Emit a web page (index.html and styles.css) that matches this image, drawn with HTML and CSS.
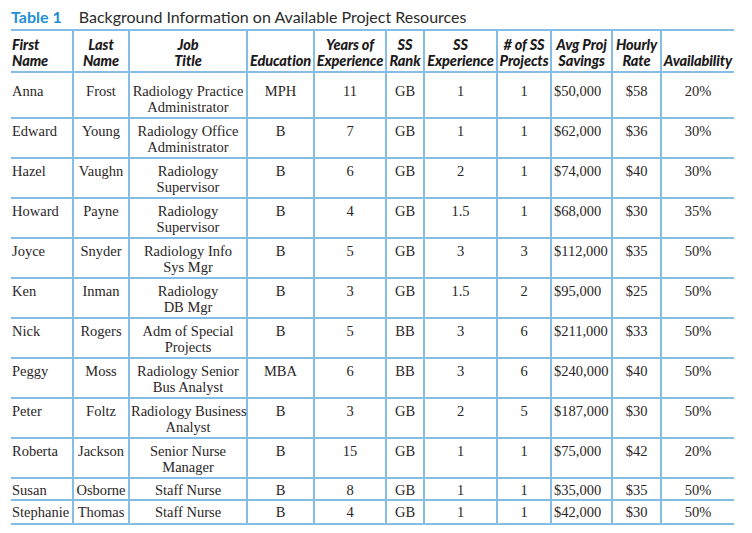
FILE: index.html
```html
<!DOCTYPE html>
<html lang="en">
<head>
<meta charset="utf-8">
<title>Table 1 Background Information on Available Project Resources</title>
<link rel="stylesheet" href="styles.css">
</head>
<body>
<div class="page">
  <h1 class="caption"><span class="label">Table 1</span><span class="caption-text">Background Information on Available Project Resources</span></h1>
  <table class="resources">
    <colgroup>
      <col class="c1"><col class="c2"><col class="c3"><col class="c4"><col class="c5"><col class="c6"><col class="c7"><col class="c8"><col class="c9"><col class="c10"><col class="c11">
    </colgroup>
    <thead>
      <tr>
        <th class="left">First<br>Name</th>
        <th>Last<br>Name</th>
        <th>Job<br>Title</th>
        <th>Education</th>
        <th>Years of<br>Experience</th>
        <th>SS<br>Rank</th>
        <th>SS<br>Experience</th>
        <th># of SS<br>Projects</th>
        <th>Avg Proj<br>Savings</th>
        <th>Hourly<br>Rate</th>
        <th>Availability</th>
      </tr>
    </thead>
    <tbody>
      <tr class="first">
        <td class="left">Anna</td><td>Frost</td><td>Radiology Practice<br>Administrator</td><td>MPH</td><td>11</td><td>GB</td><td>1</td><td>1</td><td class="money">$50,000</td><td>$58</td><td>20%</td>
      </tr>
      <tr>
        <td class="left">Edward</td><td>Young</td><td>Radiology Office<br>Administrator</td><td>B</td><td>7</td><td>GB</td><td>1</td><td>1</td><td class="money">$62,000</td><td>$36</td><td>30%</td>
      </tr>
      <tr>
        <td class="left">Hazel</td><td>Vaughn</td><td>Radiology<br>Supervisor</td><td>B</td><td>6</td><td>GB</td><td>2</td><td>1</td><td class="money">$74,000</td><td>$40</td><td>30%</td>
      </tr>
      <tr>
        <td class="left">Howard</td><td>Payne</td><td>Radiology<br>Supervisor</td><td>B</td><td>4</td><td>GB</td><td>1.5</td><td>1</td><td class="money">$68,000</td><td>$30</td><td>35%</td>
      </tr>
      <tr>
        <td class="left">Joyce</td><td>Snyder</td><td>Radiology Info<br>Sys Mgr</td><td>B</td><td>5</td><td>GB</td><td>3</td><td>3</td><td class="money">$112,000</td><td>$35</td><td>50%</td>
      </tr>
      <tr>
        <td class="left">Ken</td><td>Inman</td><td>Radiology<br>DB Mgr</td><td>B</td><td>3</td><td>GB</td><td>1.5</td><td>2</td><td class="money">$95,000</td><td>$25</td><td>50%</td>
      </tr>
      <tr>
        <td class="left">Nick</td><td>Rogers</td><td>Adm of Special<br>Projects</td><td>B</td><td>5</td><td>BB</td><td>3</td><td>6</td><td class="money">$211,000</td><td>$33</td><td>50%</td>
      </tr>
      <tr>
        <td class="left">Peggy</td><td>Moss</td><td>Radiology Senior<br>Bus Analyst</td><td>MBA</td><td>6</td><td>BB</td><td>3</td><td>6</td><td class="money">$240,000</td><td>$40</td><td>50%</td>
      </tr>
      <tr>
        <td class="left">Peter</td><td>Foltz</td><td>Radiology Business<br>Analyst</td><td>B</td><td>3</td><td>GB</td><td>2</td><td>5</td><td class="money">$187,000</td><td>$30</td><td>50%</td>
      </tr>
      <tr>
        <td class="left">Roberta</td><td>Jackson</td><td>Senior Nurse<br>Manager</td><td>B</td><td>15</td><td>GB</td><td>1</td><td>1</td><td class="money">$75,000</td><td>$42</td><td>20%</td>
      </tr>
      <tr class="single">
        <td class="left">Susan</td><td>Osborne</td><td>Staff Nurse</td><td>B</td><td>8</td><td>GB</td><td>1</td><td>1</td><td class="money">$35,000</td><td>$35</td><td>50%</td>
      </tr>
      <tr class="single last">
        <td class="left">Stephanie</td><td>Thomas</td><td>Staff Nurse</td><td>B</td><td>4</td><td>GB</td><td>1</td><td>1</td><td class="money">$42,000</td><td>$30</td><td>50%</td>
      </tr>
    </tbody>
  </table>
</div>
</body>
</html>
```

FILE: styles.css
```css
html, body {
  margin: 0;
  padding: 0;
  background: #ffffff;
}

.page {
  padding: 7px 0 0 11px;
  color: #231f20;
}

.caption {
  margin: 0 0 2px 0;
  font-family: Lato, "Open Sans", sans-serif;
  font-size: 16px;
  line-height: 20px;
  font-weight: normal;
  display: flex;
  gap: 17px;
  white-space: nowrap;
}

.caption .label {
  color: #1f8fd4;
  font-weight: bold;
}

.caption .caption-text {
  color: #2b2b2b;
}

.resources {
  border-collapse: collapse;
  table-layout: fixed;
  width: 723px;
}

.resources .c1 { width: 62px; }
.resources .c2 { width: 56px; }
.resources .c3 { width: 118px; }
.resources .c4 { width: 67px; }
.resources .c5 { width: 72px; }
.resources .c6 { width: 38px; }
.resources .c7 { width: 73px; }
.resources .c8 { width: 54px; }
.resources .c9 { width: 61px; }
.resources .c10 { width: 49px; }
.resources .c11 { width: 73px; }

.resources th,
.resources td {
  border-left: 2px solid #86bde4;
  border-top: 2px solid #86bde4;
  border-bottom: 2px solid #86bde4;
  text-align: center;
  white-space: nowrap;
  overflow: visible;
}

.resources th:first-child,
.resources td:first-child {
  border-left: none;
}

.resources th {
  font-family: Lato, "Open Sans", sans-serif;
  font-style: italic;
  font-weight: 900;
  font-size: 14.5px;
  line-height: 16px;
  color: #1d1a1b;
  vertical-align: bottom;
  padding: 6px 0 2px 0;
  letter-spacing: -0.1px;
}

.resources td {
  font-family: "Liberation Serif", "Times New Roman", serif;
  font-size: 14.5px;
  line-height: 16px;
  color: #2a2627;
  vertical-align: top;
  padding: 4px 1px 2px 1px;
}

.resources .left {
  text-align: left;
  padding-left: 1px;
}

.resources td.money {
  text-align: left;
  padding-left: 2px;
}

.resources tr.first td {
  padding-top: 10px;
}

.resources tr.single td {
  padding-top: 3px;
  padding-bottom: 1px;
}

.resources tr.last td {
  padding-bottom: 3px;
}
```
